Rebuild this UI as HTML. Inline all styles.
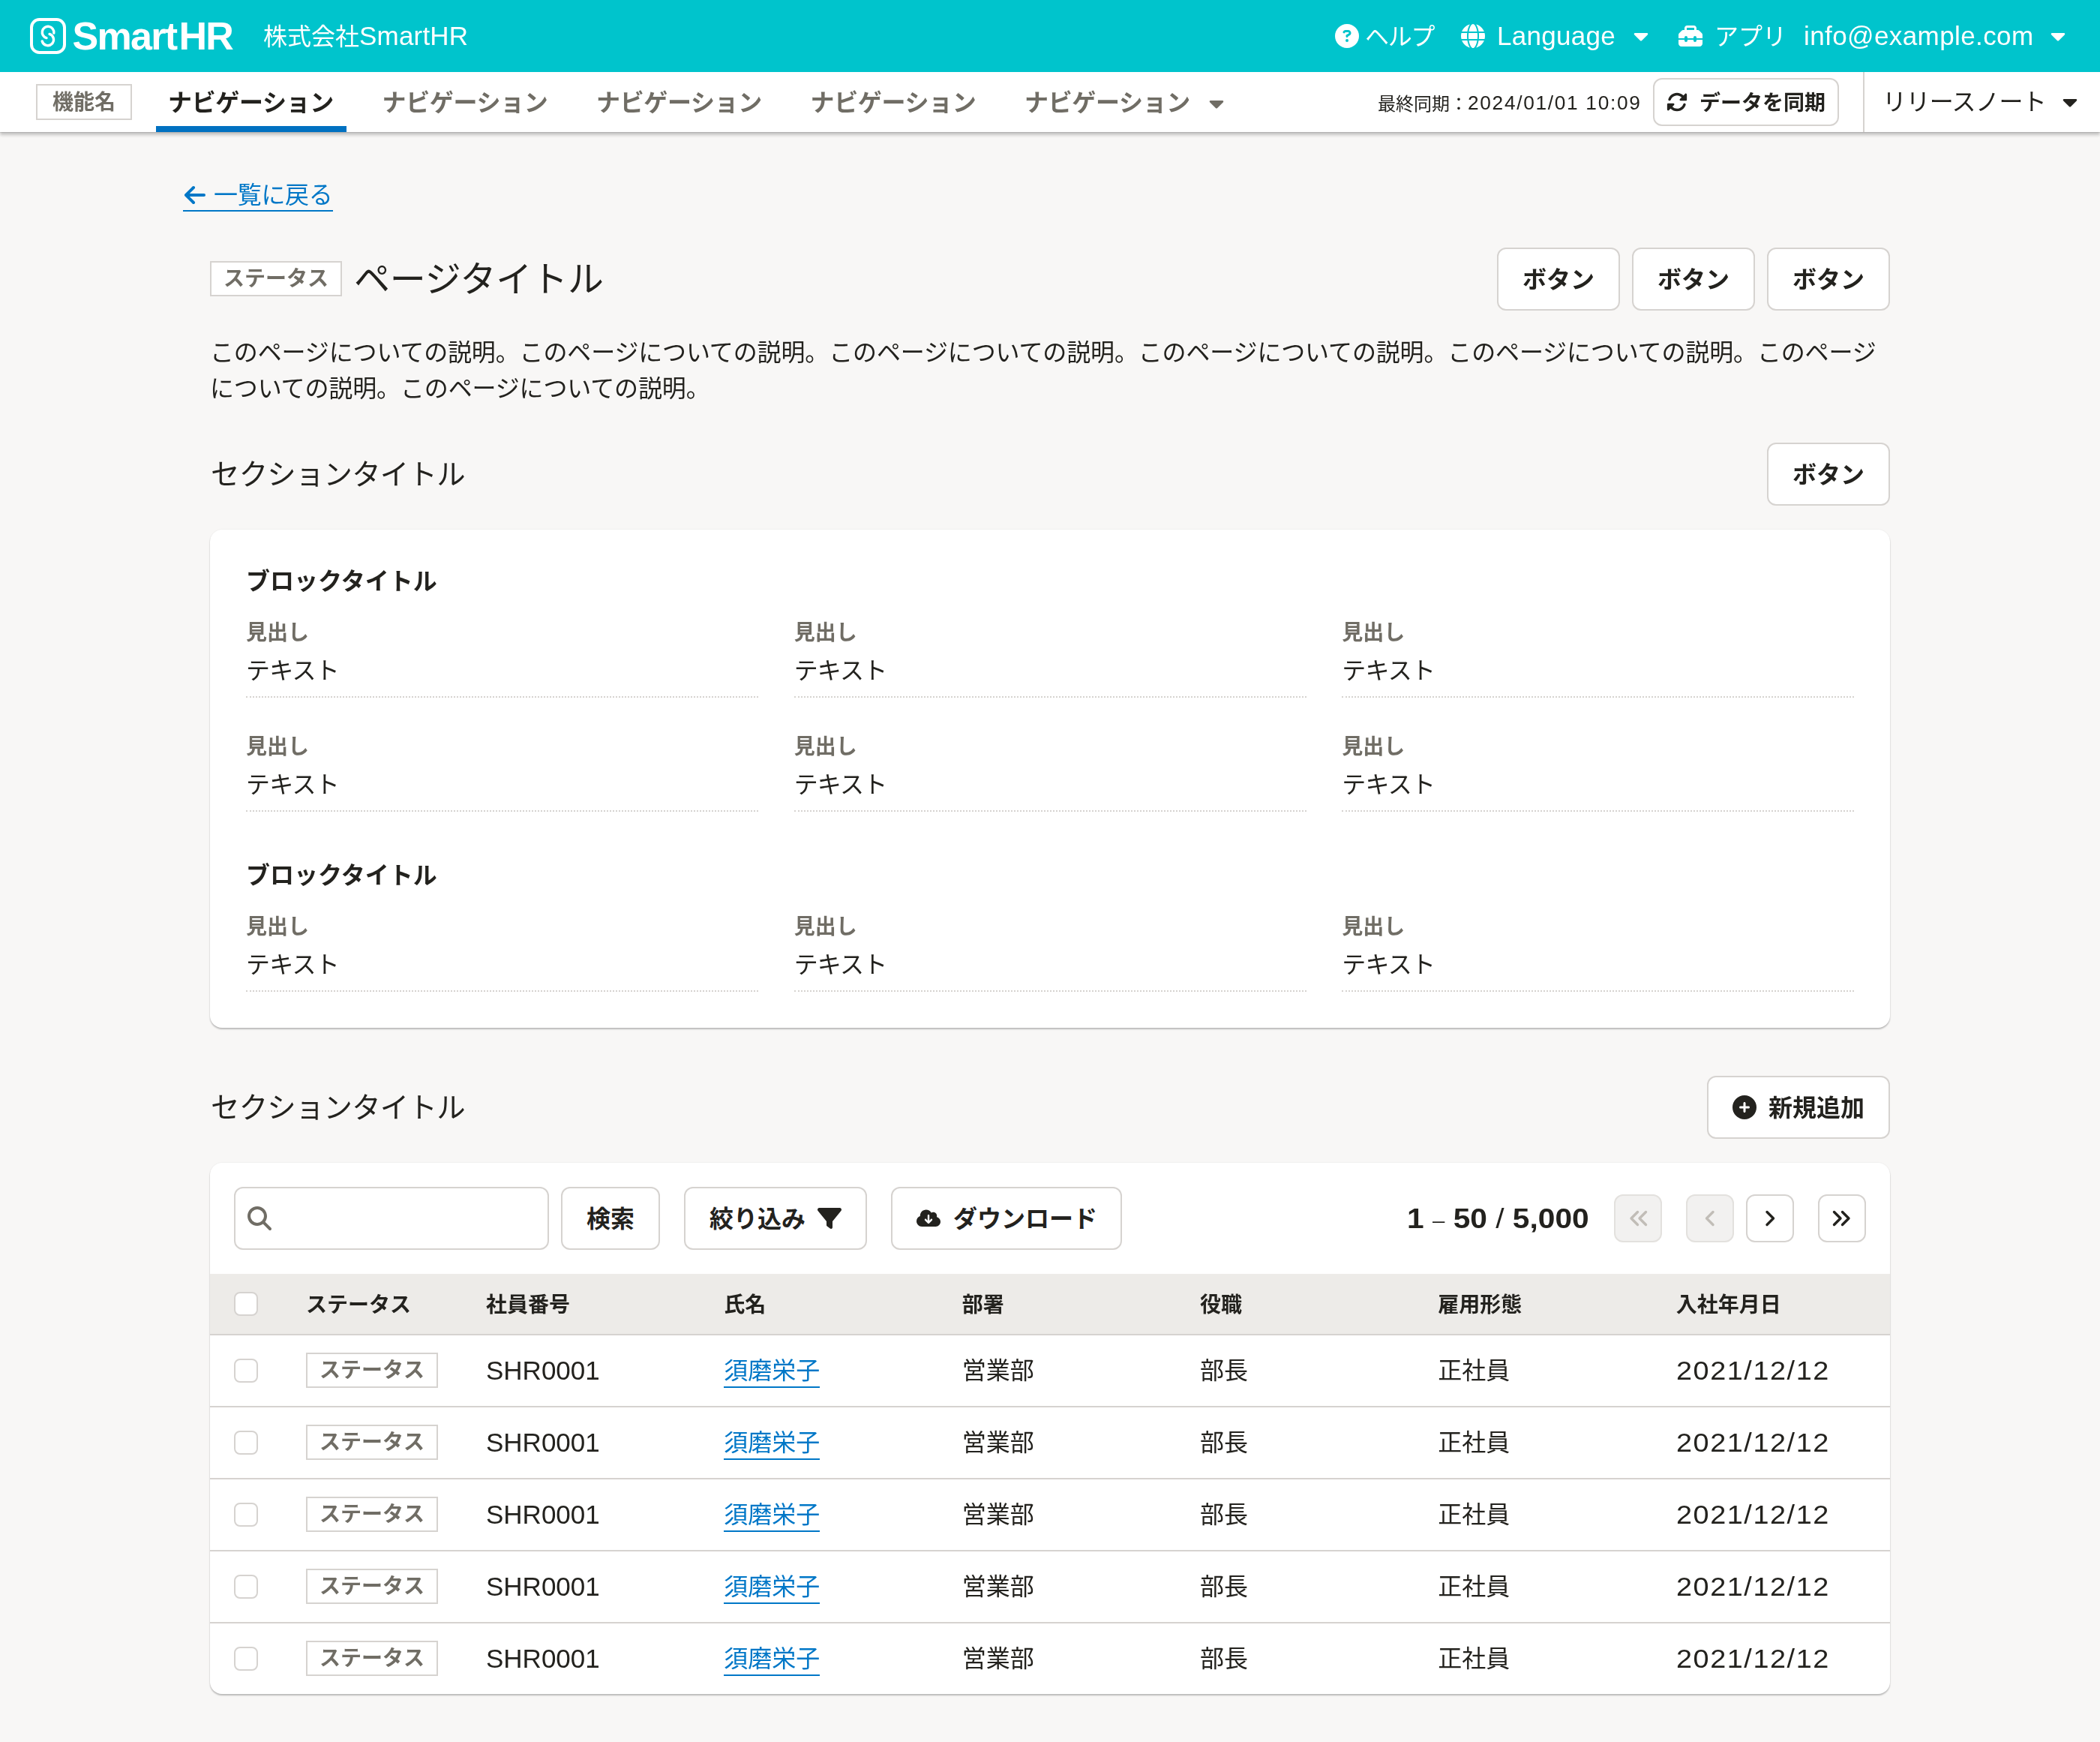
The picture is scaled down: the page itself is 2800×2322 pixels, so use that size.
<!DOCTYPE html>
<html lang="ja">
<head>
<meta charset="utf-8">
<title>SmartHR</title>
<style>
*{box-sizing:border-box;margin:0;padding:0}
html,body{width:2800px;height:2322px;overflow:hidden}
body{position:relative;background:#f8f7f6;color:#23221e;font-family:"Liberation Sans","Noto Sans CJK JP",sans-serif;font-size:32px;line-height:48px;-webkit-font-smoothing:antialiased}
body>*{filter:grayscale(0)}
.abs{position:absolute;white-space:nowrap}
svg{display:block}
a{color:#0077c7;text-decoration:none}

/* ===== header ===== */
#hd{position:absolute;left:0;top:0;width:2800px;height:96px;background:#00c4cc;color:#fff}
#hd .t{position:absolute;top:24px;height:48px;line-height:48px;font-size:32px;white-space:nowrap;color:#fff}
#hd svg{position:absolute}

/* ===== nav ===== */
#nv{position:absolute;left:0;top:96px;width:2800px;height:80px;background:#fff;box-shadow:0 1px 1px rgba(3,3,2,.1),0 4px 4px rgba(3,3,2,.21)}
#nv .fn{position:absolute;left:48px;top:16px;width:128px;height:48px;border:2px solid #d6d3d0;background:#fff;color:#706d65;font-weight:bold;font-size:28px;line-height:46px;text-align:center}
#nv .tab{position:absolute;top:1px;height:80px;line-height:80px;font-weight:bold;font-size:32px;color:#706d65;white-space:nowrap;letter-spacing:-0.36px}
#nv .tab.on{color:#23221e}
#nv .bar{position:absolute;left:208px;top:72px;width:254px;height:8px;background:#0071c1}
#nv svg{position:absolute}
#nv .sync{position:absolute;left:1837px;top:18px;height:48px;line-height:48px;font-size:24px;white-space:nowrap}
#nv .sbtn{position:absolute;left:2204px;top:8px;width:248px;height:64px;border:2px solid #d6d3d0;border-radius:12px;background:#fff}
#nv .sbtn span{position:absolute;left:60px;top:8px;line-height:48px;font-size:28px;font-weight:bold;white-space:nowrap}
#nv .vl{position:absolute;left:2484px;top:0;width:2px;height:80px;background:#d6d3d0}
#nv .rn{position:absolute;left:2510px;top:16px;line-height:48px;font-size:32px;white-space:nowrap;letter-spacing:-0.6px}

/* ===== main ===== */
.btn{position:absolute;height:84px;border:2px solid #d6d3d0;border-radius:12px;background:#fff;font-weight:bold;font-size:32px;line-height:82px;text-align:center;white-space:nowrap;color:#23221e}
.btn svg{position:absolute}
.lbl{position:absolute;width:176px;height:47px;border:2px solid #d6d3d0;background:#fff;color:#706d65;font-weight:bold;font-size:28px;line-height:43px;text-align:center;white-space:nowrap}
.h1{position:absolute;left:472px;top:343px;font-size:48px;line-height:60px;white-space:nowrap;letter-spacing:-0.2px}
.desc{position:absolute;left:280px;top:446px;width:2240px;font-size:32px;line-height:48px;letter-spacing:-0.14px}
.h2{position:absolute;left:281px;font-size:38.4px;line-height:48px;white-space:nowrap;letter-spacing:-0.75px;margin-top:1px}
.card{position:absolute;left:280px;width:2240px;background:#fff;border-radius:16px;box-shadow:0 2px 2px rgba(3,3,2,.24),0 0 2px rgba(3,3,2,.09)}
.bt{position:absolute;left:48px;font-size:32px;line-height:40px;font-weight:bold;white-space:nowrap;letter-spacing:0;margin-top:1px}
.dl{position:absolute;width:683px;height:104px;border-bottom:2px dotted #d6d3d0}
.dl dt{position:absolute;left:0;top:0;font-size:28px;line-height:35px;font-weight:bold;color:#706d65;white-space:nowrap}
.dl dd{position:absolute;left:0;top:44px;font-size:32px;line-height:48px;white-space:nowrap;letter-spacing:-0.8px}

/* ===== table card ===== */
.inp{position:absolute;left:32px;top:32px;width:420px;height:84px;border:2px solid #d6d3d0;border-radius:12px;background:#fff}
.pg{position:absolute;top:42px;width:64px;height:64px;border:2px solid #d6d3d0;border-radius:12px;background:#fff}
.pg.dis{background:#f2f1f0;border-color:#e3e1de}
.pg svg{position:absolute;left:0;top:0}
.cnt{position:absolute;top:51px;right:401px;font-size:36px;line-height:48px;font-weight:bold;white-space:nowrap;letter-spacing:0;transform:scaleX(1.13);transform-origin:100% 50%}
.thead{position:absolute;left:0;top:148px;width:2240px;height:80px;background:#edebe8}
.th{position:absolute;top:18px;font-size:28px;line-height:48px;font-weight:bold;white-space:nowrap}
.cb{position:absolute;left:32px;width:32px;height:32px;border:2px solid #d6d3d0;border-radius:8px;background:#fff}
.tr{position:absolute;left:0;width:2240px;height:96px;border-top:2px solid #d6d3d0}
.td{position:absolute;top:23px;font-size:32px;line-height:48px;white-space:nowrap}
.td.num{font-size:35px}
.td.date{letter-spacing:1.45px;transform:scaleX(1.08);transform-origin:0 50%}
.td a{border-bottom:2px solid #0077c7;display:inline-block;height:47px;line-height:48px}
</style>
</head>
<body>

<div id="hd">
  <!-- logo -->
  <svg style="left:40px;top:24px" width="48" height="48" viewBox="0 0 48 48"><rect x="2" y="2" width="44" height="44" rx="10.500" fill="none" stroke="#fff" stroke-width="4"/><path d="M31.800 20A7.800 7.800 0 1 0 22 26.600M16.200 31A7.800 7.800 0 1 0 26 21.400" fill="none" stroke="#fff" stroke-width="3.400" stroke-linecap="round"/></svg>
  <div class="t" id="brand" style="left:96.500px;top:20px;font-size:52px;line-height:56px;font-weight:bold;letter-spacing:-1.7px">Smart<span style="margin-left:3px">H</span>R</div>
  <div class="t" id="corp" style="left:351px">株式会社<span style="font-size:35px;letter-spacing:.2px">SmartHR</span></div>

  <svg style="left:1780px;top:32px" width="32" height="32" viewBox="0 0 512 512"><path fill="#fff" d="M256 512A256 256 0 1 0 256 0a256 256 0 1 0 0 512zM169.800 165.300c7.900-22.300 29.100-37.300 52.800-37.300h58.300c34.900 0 63.100 28.300 63.100 63.100c0 22.600-12.100 43.500-31.700 54.800L280 264.400c-.2 13-10.900 23.600-24 23.600c-13.300 0-24-10.700-24-24V250.500c0-8.600 4.600-16.500 12.100-20.800l44.300-25.400c4.700-2.700 7.600-7.700 7.600-13.100c0-8.400-6.800-15.100-15.100-15.100H222.600c-3.400 0-6.400 2.100-7.500 5.300l-.4 1.200c-4.400 12.500-18.200 19-30.600 14.600s-19-18.200-14.600-30.600l.4-1.200zM224 352a32 32 0 1 1 64 0 32 32 0 1 1 -64 0z"/></svg>
  <div class="t" id="help" style="left:1820px;top:25px;letter-spacing:-1.2px">ヘルプ</div>

  <svg style="left:1948px;top:32px" width="32" height="32" viewBox="0 0 512 512"><path fill="#fff" d="M352 256c0 22.200-1.200 43.600-3.300 64H163.300c-2.200-20.400-3.300-41.800-3.300-64s1.200-43.600 3.300-64H348.700c2.200 20.400 3.300 41.800 3.300 64zm28.800-64H503.900c5.300 20.500 8.100 41.900 8.100 64s-2.800 43.500-8.100 64H380.800c2.100-20.600 3.200-42 3.200-64s-1.100-43.400-3.200-64zm112.600-32H376.700c-10-63.900-29.800-117.400-55.300-151.600c78.300 20.700 142 77.500 171.900 151.600zm-149.100 0H167.700c6.100-36.400 15.500-68.600 27-94.700c10.500-23.600 22.200-40.700 33.500-51.500C239.400 3.200 248.700 0 256 0s16.600 3.200 27.800 13.800c11.300 10.800 23 27.900 33.500 51.500c11.600 26 20.900 58.200 27 94.700zm-209 0H18.600C48.600 85.900 112.200 29.100 190.600 8.400C165.100 42.600 145.300 96.100 135.300 160zM8.100 192H131.200c-2.100 20.600-3.200 42-3.200 64s1.100 43.400 3.200 64H8.100C2.800 299.500 0 278.100 0 256s2.800-43.500 8.100-64zM194.700 446.600c-11.600-26-20.900-58.200-27-94.600H344.300c-6.100 36.400-15.500 68.600-27 94.600c-10.500 23.600-22.200 40.700-33.500 51.500C272.600 508.800 263.300 512 256 512s-16.600-3.200-27.800-13.800c-11.300-10.800-23-27.900-33.500-51.500zM135.300 352c10 63.900 29.800 117.400 55.300 151.600C112.200 482.900 48.600 426.100 18.600 352H135.300zm358.100 0c-30 74.100-93.600 130.900-171.900 151.600c25.500-34.200 45.200-87.700 55.300-151.600H493.400z"/></svg>
  <div class="t" id="lang" style="left:1996px;font-size:35px;letter-spacing:.3px">Language</div>
  <svg style="left:2178px;top:32px" width="20" height="32" viewBox="0 0 320 512"><path fill="#fff" d="M31.300 192h257.300c17.800 0 26.700 21.500 14.100 34.100L174.100 354.800c-7.800 7.800-20.500 7.800-28.300 0L17.200 226.100C4.600 213.500 13.500 192 31.300 192z"/></svg>

  <svg style="left:2238px;top:32px" width="32" height="32" viewBox="0 0 512 512"><path fill="#fff" d="M176 88v40H336V88c0-4.400-3.600-8-8-8H184c-4.400 0-8 3.600-8 8zm-48 40V88c0-30.900 25.100-56 56-56H328c30.900 0 56 25.100 56 56v40h28.100c12.700 0 24.900 5.100 33.900 14.100l51.900 51.900c9 9 14.100 21.200 14.100 33.900V304H384V288c0-17.700-14.300-32-32-32s-32 14.300-32 32v16H192V288c0-17.700-14.300-32-32-32s-32 14.300-32 32v16H0V227.900c0-12.700 5.100-24.900 14.100-33.900l51.900-51.900c9-9 21.200-14.100 33.900-14.100H128zM0 416V336H128v16c0 17.700 14.300 32 32 32s32-14.300 32-32V336H320v16c0 17.700 14.300 32 32 32s32-14.300 32-32V336H512v80c0 35.300-28.700 64-64 64H64c-35.300 0-64-28.700-64-64z"/></svg>
  <div class="t" id="app" style="left:2286px;top:25px">アプリ</div>
  <div class="t" id="mail" style="left:2405px;font-size:35px;letter-spacing:.4px">info@example.com</div>
  <svg style="left:2734px;top:32px" width="20" height="32" viewBox="0 0 320 512"><path fill="#fff" d="M31.300 192h257.300c17.800 0 26.700 21.500 14.100 34.100L174.100 354.800c-7.800 7.800-20.500 7.800-28.300 0L17.200 226.100C4.600 213.500 13.500 192 31.300 192z"/></svg>
</div>

<div id="nv">
  <div class="fn">機能名</div>
  <div class="tab on" style="left:224px">ナビゲーション</div>
  <div class="tab" style="left:509.500px">ナビゲーション</div>
  <div class="tab" style="left:795px">ナビゲーション</div>
  <div class="tab" style="left:1080.500px">ナビゲーション</div>
  <div class="tab" style="left:1366px">ナビゲーション</div>
  <svg style="left:1612px;top:25.5px" width="20" height="32" viewBox="0 0 320 512"><path fill="#706d65" d="M31.300 192h257.300c17.800 0 26.700 21.500 14.100 34.100L174.100 354.800c-7.800 7.800-20.500 7.800-28.300 0L17.200 226.100C4.600 213.500 13.500 192 31.300 192z"/></svg>
  <div class="bar"></div>
  <div class="sync" id="sync">最終同期：<span style="font-size:26.25px;letter-spacing:1.7px;position:relative;top:-1px">2024/01/01 10:09</span></div>
  <div class="sbtn">
    <svg style="left:16px;top:16px" width="28" height="28" viewBox="0 0 512 512"><path fill="#23221e" d="M142.900 142.900c62.200-62.200 162.700-62.500 225.300-1L327 183c-6.900 6.900-8.900 17.200-5.200 26.200s12.500 14.800 22.200 14.800H463.500c0 0 0 0 0 0H472c13.300 0 24-10.700 24-24V72c0-9.700-5.800-18.500-14.800-22.200s-19.300-1.700-26.200 5.200L413.400 96.600c-87.600-86.500-228.700-86.200-315.800 1C73.200 122 55.600 150.700 44.800 181.400c-5.900 16.700 2.900 34.900 19.500 40.800s34.900-2.900 40.800-19.500c7.700-21.800 20.200-42.300 37.800-59.800zM16 312v7.600 .7V440c0 9.700 5.800 18.500 14.800 22.200s19.300 1.700 26.200-5.200l41.600-41.600c87.600 86.500 228.700 86.200 315.800-1c24.400-24.400 42.100-53.100 52.900-83.700c5.900-16.700-2.900-34.900-19.500-40.800s-34.900 2.900-40.800 19.500c-7.700 21.800-20.200 42.300-37.800 59.800c-62.200 62.200-162.700 62.500-225.300 1L185 329c6.900-6.900 8.900-17.200 5.200-26.200s-12.500-14.800-22.200-14.800H48.400h-.7H40c-13.300 0-24 10.700-24 24z"/></svg>
    <span>データを同期</span>
  </div>
  <div class="vl"></div>
  <div class="rn" id="rn">リリースノート</div>
  <svg style="left:2750px;top:24px" width="20" height="32" viewBox="0 0 320 512"><path fill="#23221e" d="M31.300 192h257.300c17.800 0 26.700 21.500 14.100 34.100L174.100 354.800c-7.800 7.800-20.500 7.800-28.300 0L17.200 226.100C4.600 213.500 13.500 192 31.300 192z"/></svg>
</div>


<a class="abs" id="back" style="left:244px;top:236px;line-height:48px;font-size:32px;border-bottom:2px solid #0077c7;height:46px;padding-left:41px;letter-spacing:-0.3px">
  <svg style="position:absolute;left:0;top:10px" width="32" height="28" viewBox="0 0 32 28"><path fill="none" stroke="#0077c7" stroke-width="4" stroke-linecap="round" stroke-linejoin="round" d="M28 14H4.500M14 4L4 14l10 10"/></svg>一覧に戻る</a>

<div class="lbl" style="left:280px;top:348px">ステータス</div>
<h1 class="h1" style="font-weight:normal">ページタイトル</h1>
<div class="btn" style="left:1996px;top:330px;width:164px">ボタン</div>
<div class="btn" style="left:2176px;top:330px;width:164px">ボタン</div>
<div class="btn" style="left:2356px;top:330px;width:164px">ボタン</div>
<p class="desc">このページについての説明。このページについての説明。このページについての説明。このページについての説明。このページについての説明。このページについての説明。このページについての説明。</p>

<h2 class="h2" style="top:608px;font-weight:normal">セクションタイトル</h2>
<div class="btn" style="left:2356px;top:590px;width:164px">ボタン</div>

<div class="card" style="top:706px;height:664px">
  <div class="bt" style="top:48px">ブロックタイトル</div>
  <dl class="dl" style="left:48px;top:120px"><dt>見出し</dt><dd>テキスト</dd></dl>
  <dl class="dl" style="left:778.67px;top:120px"><dt>見出し</dt><dd>テキスト</dd></dl>
  <dl class="dl" style="left:1509.33px;top:120px"><dt>見出し</dt><dd>テキスト</dd></dl>
  <dl class="dl" style="left:48px;top:272px"><dt>見出し</dt><dd>テキスト</dd></dl>
  <dl class="dl" style="left:778.67px;top:272px"><dt>見出し</dt><dd>テキスト</dd></dl>
  <dl class="dl" style="left:1509.33px;top:272px"><dt>見出し</dt><dd>テキスト</dd></dl>
  <div class="bt" style="top:440px">ブロックタイトル</div>
  <dl class="dl" style="left:48px;top:512px"><dt>見出し</dt><dd>テキスト</dd></dl>
  <dl class="dl" style="left:778.67px;top:512px"><dt>見出し</dt><dd>テキスト</dd></dl>
  <dl class="dl" style="left:1509.33px;top:512px"><dt>見出し</dt><dd>テキスト</dd></dl>
</div>


<h2 class="h2" style="top:1452px;font-weight:normal">セクションタイトル</h2>
<div class="btn" style="left:2276px;top:1434px;width:244px;text-align:left;padding-left:80px">
  <svg style="left:32px;top:24px" width="32" height="32" viewBox="0 0 512 512"><path fill="#23221e" d="M256 512A256 256 0 1 0 256 0a256 256 0 1 0 0 512zM232 344V280H168c-13.300 0-24-10.700-24-24s10.700-24 24-24h64V168c0-13.300 10.700-24 24-24s24 10.700 24 24v64h64c13.300 0 24 10.700 24 24s-10.700 24-24 24H280v64c0 13.300-10.700 24-24 24s-24-10.700-24-24z"/></svg>新規追加</div>

<div class="card" style="top:1550px;height:708px;overflow:hidden">
  <div class="inp"><svg style="position:absolute;left:16px;top:24px" width="32" height="32" viewBox="0 0 512 512"><path fill="#706d65" d="M416 208c0 45.900-14.900 88.300-40 122.700L502.600 457.400c12.500 12.500 12.500 32.800 0 45.300s-32.800 12.500-45.300 0L330.700 376c-34.400 25.200-76.800 40-122.700 40C93.100 416 0 322.900 0 208S93.100 0 208 0S416 93.100 416 208zM208 352a144 144 0 1 0 0-288 144 144 0 1 0 0 288z"/></svg></div>
  <div class="btn" style="left:468px;top:32px;width:132px">検索</div>
  <div class="btn" style="left:632px;top:32px;width:244px;text-align:left;padding-left:32px">絞り込み<svg style="left:176px;top:24px" width="32" height="32" viewBox="0 0 512 512"><path fill="#23221e" d="M3.900 54.900C10.500 40.900 24.500 32 40 32H472c15.500 0 29.500 8.900 36.100 22.900s4.600 30.500-5.200 42.500L320 320.900V448c0 12.100-6.800 23.200-17.700 28.600s-23.800 4.300-33.500-3l-64-48c-8.100-6-12.800-15.500-12.800-25.600V320.900L9 97.300C-.7 85.400-2.800 68.800 3.900 54.900z"/></svg></div>
  <div class="btn" style="left:908px;top:32px;width:308px;text-align:left;padding-left:81px"><svg style="left:32px;top:27px" width="32" height="25.600" viewBox="0 0 640 512"><path fill="#23221e" d="M144 480C64.500 480 0 415.500 0 336c0-62.800 40.200-116.200 96.200-135.900c-.1-2.700-.2-5.400-.2-8.100c0-88.400 71.600-160 160-160c59.300 0 111 32.200 138.700 80.200C409.900 102 428.300 96 448 96c53 0 96 43 96 96c0 12.200-2.300 23.800-6.400 34.600C596 238.400 640 290.100 640 352c0 70.700-57.300 128-128 128H144zm79-167l80 80c9.400 9.400 24.600 9.400 33.900 0l80-80c9.400-9.400 9.400-24.600 0-33.900s-24.600-9.400-33.900 0l-39 39V184c0-13.300-10.700-24-24-24s-24 10.700-24 24V318.100l-39-39c-9.400-9.400-24.600-9.400-33.900 0s-9.400 24.600 0 33.900z"/></svg>ダウンロード</div>

  <div class="cnt" id="cnt">1 <span style="font-weight:normal;font-size:26px;vertical-align:1px">–</span> 50 <span style="font-weight:normal">/</span> 5,000</div>
  <div class="pg dis" style="left:1872px"><svg width="60" height="60" viewBox="0 0 60 60"><path fill="none" stroke="#c1bdb7" stroke-width="3.4" stroke-linecap="round" stroke-linejoin="round" d="M29.500 21.500l-8.500 8.500 8.500 8.500M40.500 21.500l-8.500 8.500 8.500 8.500"/></svg></div>
  <div class="pg dis" style="left:1968px"><svg width="60" height="60" viewBox="0 0 60 60"><path fill="none" stroke="#c1bdb7" stroke-width="3.4" stroke-linecap="round" stroke-linejoin="round" d="M34 21.500l-8.500 8.500 8.500 8.500"/></svg></div>
  <div class="pg" style="left:2048px"><svg width="60" height="60" viewBox="0 0 60 60"><path fill="none" stroke="#23221e" stroke-width="3.4" stroke-linecap="round" stroke-linejoin="round" d="M26 21.500l8.500 8.500-8.500 8.500"/></svg></div>
  <div class="pg" style="left:2144px"><svg width="60" height="60" viewBox="0 0 60 60"><path fill="none" stroke="#23221e" stroke-width="3.4" stroke-linecap="round" stroke-linejoin="round" d="M19.500 21.500l8.500 8.500-8.500 8.500M30.500 21.500l8.500 8.500-8.500 8.500"/></svg></div>

  <div class="thead">
    <div class="cb" style="top:24px"></div>
    <div class="th" style="left:128px">ステータス</div>
    <div class="th" style="left:368.0px">社員番号</div>
    <div class="th" style="left:685.3px">氏名</div>
    <div class="th" style="left:1002.7px">部署</div>
    <div class="th" style="left:1320.0px">役職</div>
    <div class="th" style="left:1637.3px">雇用形態</div>
    <div class="th" style="left:1954.7px">入社年月日</div>
  </div>
  <div class="tr" style="top:228px">
    <div class="cb" style="top:31px"></div>
    <div class="lbl" style="left:128px;top:23px">ステータス</div>
    <div class="td num" style="left:368.0px">SHR0001</div>
    <div class="td" style="left:685.3px"><a>須磨栄子</a></div>
    <div class="td" style="left:1002.7px">営業部</div>
    <div class="td" style="left:1320.0px">部長</div>
    <div class="td" style="left:1637.3px">正社員</div>
    <div class="td num date" style="left:1954.7px">2021/12/12</div>
  </div>
  <div class="tr" style="top:324px">
    <div class="cb" style="top:31px"></div>
    <div class="lbl" style="left:128px;top:23px">ステータス</div>
    <div class="td num" style="left:368.0px">SHR0001</div>
    <div class="td" style="left:685.3px"><a>須磨栄子</a></div>
    <div class="td" style="left:1002.7px">営業部</div>
    <div class="td" style="left:1320.0px">部長</div>
    <div class="td" style="left:1637.3px">正社員</div>
    <div class="td num date" style="left:1954.7px">2021/12/12</div>
  </div>
  <div class="tr" style="top:420px">
    <div class="cb" style="top:31px"></div>
    <div class="lbl" style="left:128px;top:23px">ステータス</div>
    <div class="td num" style="left:368.0px">SHR0001</div>
    <div class="td" style="left:685.3px"><a>須磨栄子</a></div>
    <div class="td" style="left:1002.7px">営業部</div>
    <div class="td" style="left:1320.0px">部長</div>
    <div class="td" style="left:1637.3px">正社員</div>
    <div class="td num date" style="left:1954.7px">2021/12/12</div>
  </div>
  <div class="tr" style="top:516px">
    <div class="cb" style="top:31px"></div>
    <div class="lbl" style="left:128px;top:23px">ステータス</div>
    <div class="td num" style="left:368.0px">SHR0001</div>
    <div class="td" style="left:685.3px"><a>須磨栄子</a></div>
    <div class="td" style="left:1002.7px">営業部</div>
    <div class="td" style="left:1320.0px">部長</div>
    <div class="td" style="left:1637.3px">正社員</div>
    <div class="td num date" style="left:1954.7px">2021/12/12</div>
  </div>
  <div class="tr" style="top:612px">
    <div class="cb" style="top:31px"></div>
    <div class="lbl" style="left:128px;top:23px">ステータス</div>
    <div class="td num" style="left:368.0px">SHR0001</div>
    <div class="td" style="left:685.3px"><a>須磨栄子</a></div>
    <div class="td" style="left:1002.7px">営業部</div>
    <div class="td" style="left:1320.0px">部長</div>
    <div class="td" style="left:1637.3px">正社員</div>
    <div class="td num date" style="left:1954.7px">2021/12/12</div>
  </div>
</div>



</body>
</html>
